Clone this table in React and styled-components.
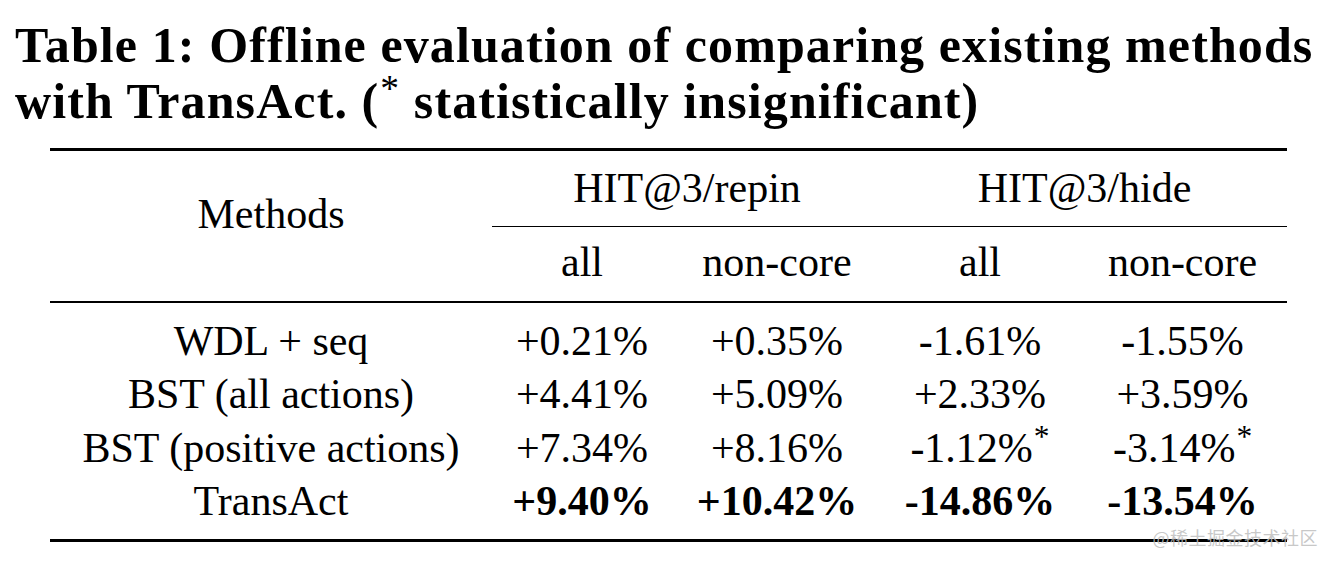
import styled, { createGlobalStyle } from "styled-components";

const GlobalStyle = createGlobalStyle`
  html, body {
    margin: 0;
    padding: 0;
    background: #fff;
  }
  body {
    font-family: "Liberation Serif", "Times New Roman", serif;
    color: #000;
  }
`;

const rows = [
  { name: "WDL + seq", values: ["+0.21%", "+0.35%", "-1.61%", "-1.55%"] },
  { name: "BST (all actions)", values: ["+4.41%", "+5.09%", "+2.33%", "+3.59%"] },
  {
    name: "BST (positive actions)",
    values: ["+7.34%", "+8.16%", "-1.12%", "-3.14%"],
    stars: [false, false, true, true],
  },
  { name: "TransAct", values: ["+9.40%", "+10.42%", "-14.86%", "-13.54%"], bold: true },
];

const colWidths = [442, 180, 210, 196, 209];

export default function App() {
  return (
    <>
      <GlobalStyle />
      <Page>
        <Caption>
          Table 1: Offline evaluation of comparing existing methods
          <br />
          with TransAct. (<Star>*</Star> statistically insignificant)
        </Caption>
        <Table>
          <colgroup>
            {colWidths.map((w, i) => (
              <col key={i} style={{ width: w }} />
            ))}
          </colgroup>
          <thead>
            <tr>
              <MethodsHead rowSpan={2}>Methods</MethodsHead>
              <GroupHead colSpan={2}>HIT@3/repin</GroupHead>
              <GroupHead colSpan={2}>HIT@3/hide</GroupHead>
            </tr>
            <tr>
              <SubHead>all</SubHead>
              <SubHead>non-core</SubHead>
              <SubHead>all</SubHead>
              <SubHead>non-core</SubHead>
            </tr>
          </thead>
          <tbody>
            {rows.map((r, i) => (
              <tr key={r.name}>
                <Cell $first={i === 0} $last={i === rows.length - 1}>
                  {r.name}
                </Cell>
                {r.values.map((v, j) => (
                  <Cell
                    key={j}
                    $first={i === 0}
                    $last={i === rows.length - 1}
                    $bold={r.bold}
                  >
                    {v}
                    {r.stars && r.stars[j] && <Star>*</Star>}
                  </Cell>
                ))}
              </tr>
            ))}
          </tbody>
        </Table>
        <Watermark>@稀土掘金技术社区</Watermark>
      </Page>
    </>
  );
}

const Page = styled.div`
  position: relative;
  width: 1336px;
  height: 566px;
  overflow: hidden;
  padding-top: 17px;
  box-sizing: border-box;
`;

const Caption = styled.h1`
  margin: 0 0 19px 15px;
  font-family: "Liberation Serif", "Times New Roman", serif;
  font-weight: 700;
  font-size: 50px;
  line-height: 56px;
  letter-spacing: 1.1px;
  white-space: nowrap;
`;

const Star = styled.span`
  font-size: 0.75em;
  vertical-align: 0.45em;
  line-height: 0;
  font-weight: 400;
  margin-left: 1px;
`;

const Table = styled.table`
  margin-left: 50px;
  width: 1237px;
  border-collapse: separate;
  border-spacing: 0;
  table-layout: fixed;
  font-size: 42px;
  line-height: 53.5px;
`;

const HeadCell = styled.th`
  font-weight: 400;
  text-align: center;
  padding: 0;
  white-space: nowrap;
`;

const MethodsHead = styled(HeadCell)`
  vertical-align: top;
  padding-top: 37px;
  border-top: 3px solid #000;
  border-bottom: 2px solid #000;
`;

const GroupHead = styled(HeadCell)`
  border-top: 3px solid #000;
  border-bottom: 1px solid #000;
  padding: 11px 0 10px;
`;

const SubHead = styled(HeadCell)`
  padding: 9px 0 11.5px;
  border-bottom: 2px solid #000;
`;

const Cell = styled.td`
  text-align: center;
  white-space: nowrap;
  padding: ${(p) => (p.$first ? "12px" : "0")} 0 ${(p) => (p.$last ? "10px" : "0")};
  border-bottom: ${(p) => (p.$last ? "3px solid #000" : "none")};
  font-weight: ${(p) => (p.$bold ? 700 : 400)};
`;

const Watermark = styled.div`
  position: absolute;
  right: 18px;
  bottom: 18px;
  font-family: "Noto Sans CJK SC", sans-serif;
  font-size: 18px;
  line-height: 22px;
  color: rgba(190, 190, 190, 0.85);
  letter-spacing: 0.5px;
`;
